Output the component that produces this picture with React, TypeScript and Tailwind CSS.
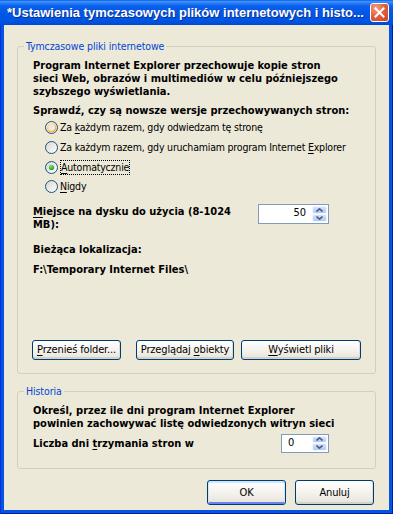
import React from "react";

const F = "font-['DejaVu_Sans_Condensed','DejaVu_Sans',sans-serif]";

function Radio({ state }: { state: "normal" | "hot" | "checked" }) {
  const id = "rg-" + state;
  return (
    <svg width="13" height="13" viewBox="0 0 13 13" className="shrink-0">
      <defs>
        <linearGradient id={id} x1="0" y1="0" x2="1" y2="1">
          <stop offset="0" stopColor="#D6D6CE" />
          <stop offset="1" stopColor="#FFFFFF" />
        </linearGradient>
        <linearGradient id={id + "h"} x1="0" y1="0" x2="0.6" y2="1">
          <stop offset="0" stopColor="#FFF0CF" />
          <stop offset="1" stopColor="#F8B030" />
        </linearGradient>
        <radialGradient id={id + "c"} cx="0.4" cy="0.35" r="0.7">
          <stop offset="0" stopColor="#7BE07A" />
          <stop offset="1" stopColor="#1B9A1B" />
        </radialGradient>
      </defs>
      <circle cx="6.5" cy="6.5" r="6" fill={`url(#${id})`} stroke="#1C5180" strokeWidth="1" />
      {state === "hot" && (
        <circle cx="6.5" cy="6.5" r="4.2" fill="none" stroke={`url(#${id}h)`} strokeWidth="1.8" />
      )}
      {state === "checked" && <circle cx="6.5" cy="6.5" r="2.6" fill={`url(#${id}c)`} />}
    </svg>
  );
}

function SpinBtn({ up }: { up: boolean }) {
  return (
    <div className="flex flex-1 items-center justify-center rounded-[2px] border border-[#F2F6FE] bg-linear-to-b from-[#D6E2FC] to-[#B4C8F6]">
      <svg width="7" height="4" viewBox="0 0 7 4">
        {up ? (
          <path d="M0.5 3.5 L3.5 0.8 L6.5 3.5" fill="none" stroke="#4D6185" strokeWidth="1.6" />
        ) : (
          <path d="M0.5 0.5 L3.5 3.2 L6.5 0.5" fill="none" stroke="#4D6185" strokeWidth="1.6" />
        )}
      </svg>
    </div>
  );
}

function Spinner({ value, className, textClass }: { value: string; className: string; textClass: string }) {
  return (
    <div className={"flex shrink-0 items-stretch border border-[#7F9DB9] bg-white p-[1px] " + className}>
      <div className={"flex flex-1 items-center text-[11px] text-black " + textClass}>{value}</div>
      <div className="flex w-[15px] flex-col">
        <SpinBtn up={true} />
        <SpinBtn up={false} />
      </div>
    </div>
  );
}

function XPButton({
  children,
  className,
  isDefault,
}: {
  children: React.ReactNode;
  className: string;
  isDefault?: boolean;
}) {
  return (
    <div
      className={
        "flex shrink-0 items-center justify-center rounded-[3px] border border-[#003C74] bg-linear-to-b from-white via-[#F4F3EE] to-[#E6E3D9] text-[11px] leading-[13px] tracking-[-0.15px] text-black " +
        (isDefault
          ? "shadow-[inset_0_1px_0_1px_#CEE7FF,inset_0_-1px_0_1px_#6982EE] "
          : "shadow-[inset_0_-2px_0_#D6D0C5,inset_-1px_0_0_#E2DED4] ") +
        className
      }
    >
      {children}
    </div>
  );
}

function U({ children }: { children: React.ReactNode }) {
  return <span className="underline underline-offset-[2px]">{children}</span>;
}

export default function App() {
  return (
    <div
      className={
        "flex h-[514px] w-[393px] flex-col bg-[#0553E2] shadow-[inset_1px_0_#0831D9,inset_-1px_0_#001EA0,inset_0_-1px_#001EA0] " +
        F
      }
    >
      {/* Title bar */}
      <div className="flex h-[25px] shrink-0 items-center bg-[linear-gradient(180deg,#0A5AE8_0%,#3D92FB_6%,#2A80F8_12%,#0A5FEB_24%,#0057E6_55%,#0054E2_85%,#0049D2_100%)] pl-[7px] pr-[4px]">
        <div className="flex-1 truncate whitespace-nowrap font-['Liberation_Sans',sans-serif] text-[13px] font-bold leading-[16px] text-white [text-shadow:1px_1px_#0C2D8E]">
          *Ustawienia tymczasowych plików internetowych i histo...
        </div>
        <div className="flex h-[19px] w-[19px] shrink-0 items-center justify-center rounded-[3px] border border-white bg-[radial-gradient(circle_at_30%_25%,#F4A18A_0%,#E2633F_45%,#C8431E_100%)]">
          <svg width="11" height="11" viewBox="0 0 11 11">
            <path d="M1.5 1.5 L9.5 9.5 M9.5 1.5 L1.5 9.5" stroke="white" strokeWidth="2" strokeLinecap="square" />
          </svg>
        </div>
      </div>

      {/* Body */}
      <div className="mx-[4px] mb-[4px] flex flex-1 flex-col bg-[#ECE9D8] px-[13px] pt-[15px] text-black">
        {/* Group 1 */}
        <fieldset className="rounded-[3px] border border-[#D0D0BF] pb-[13px] pl-[15px]">
          <legend className="-ml-[9px] px-[2px] text-[10.5px] leading-[13px] tracking-[-0.1px] text-[#0046D5]">
            Tymczasowe pliki internetowe
          </legend>
          <div className="mt-[6px] whitespace-nowrap text-[11px] font-bold leading-[13px]">
            Program Internet Explorer przechowuje kopie stron
            <br />
            sieci Web, obrazów i multimediów w celu późniejszego
            <br />
            szybszego wyświetlania.
          </div>
          <div className="mt-[6px] whitespace-nowrap text-[11px] font-bold leading-[13px]">
            Sprawdź, czy są nowsze wersje przechowywanych stron:
          </div>
          <div className="mt-[1px] flex flex-col pl-[12px] text-[10.5px] leading-[13px] tracking-[-0.2px]">
            <div className="flex h-[19.67px] items-center whitespace-nowrap">
              <Radio state="hot" />
              <span className="ml-[2px]">
                Za <U>k</U>ażdym razem, gdy odwiedzam tę stronę
              </span>
            </div>
            <div className="flex h-[19.67px] items-center whitespace-nowrap">
              <Radio state="normal" />
              <span className="ml-[2px]">
                Za każdym razem, gdy uruchamiam program Internet <U>E</U>xplorer
              </span>
            </div>
            <div className="flex h-[19.67px] items-center whitespace-nowrap">
              <Radio state="checked" />
              <span className="ml-[2px] border border-dotted border-black leading-[13px]">
                <U>A</U>utomatycznie
              </span>
            </div>
            <div className="flex h-[19.67px] items-center whitespace-nowrap">
              <Radio state="normal" />
              <span className="ml-[2px]">
                <U>N</U>igdy
              </span>
            </div>
          </div>
          <div className="mt-[7px] flex items-start">
            <div className="mt-[1px] w-[225px] whitespace-nowrap text-[11px] font-bold leading-[13px]">
              <U>M</U>iejsce na dysku do użycia (8-1024
              <br />
              MB):
            </div>
            <Spinner value="50" className="h-[20px] w-[71px]" textClass="justify-end pr-[6px]" />
          </div>
          <div className="mt-[12px] whitespace-nowrap text-[11px] font-bold leading-[13px]">
            Bieżąca lokalizacja:
          </div>
          <div className="mt-[7px] whitespace-nowrap text-[11px] font-bold leading-[13px]">
            F:\Temporary Internet Files\
          </div>
          <div className="-ml-[1px] mt-[64px] flex">
            <XPButton className="h-[20px] w-[89px]">
              <span>
                <U>P</U>rzenieś folder...
              </span>
            </XPButton>
            <XPButton className="ml-[15px] h-[20px] w-[98px]">
              <span>
                Przeglądaj <U>o</U>biekty
              </span>
            </XPButton>
            <XPButton className="ml-[7px] h-[20px] w-[120px]">
              <span>
                <U>W</U>yświetl pliki
              </span>
            </XPButton>
          </div>
        </fieldset>

        {/* Group 2 */}
        <fieldset className="mt-[11px] rounded-[3px] border border-[#D0D0BF] pb-[15px] pl-[15px]">
          <legend className="-ml-[9px] px-[2px] text-[10.5px] leading-[13px] tracking-[-0.1px] text-[#0046D5]">
            Historia
          </legend>
          <div className="mt-[6px] h-[28px] overflow-hidden whitespace-nowrap text-[11px] font-bold leading-[13px]">
            Określ, przez ile dni program Internet Explorer
            <br />
            powinien zachowywać listę odwiedzonych witryn sieci
            <br />
            Web.
          </div>
          <div className="mt-[2px] flex items-center">
            <div className="w-[248px] whitespace-nowrap text-[11px] font-bold leading-[13px]">
              Liczba dni <U>t</U>rzymania stron w
            </div>
            <Spinner value="0" className="h-[19px] w-[48px]" textClass="justify-start pl-[5px]" />
          </div>
        </fieldset>

        <div className="mt-[11px] flex justify-end pr-[2px]">
          <XPButton className="h-[25px] w-[79px]" isDefault>
            OK
          </XPButton>
          <XPButton className="ml-[9px] h-[25px] w-[79px]">Anuluj</XPButton>
        </div>
      </div>
    </div>
  );
}
